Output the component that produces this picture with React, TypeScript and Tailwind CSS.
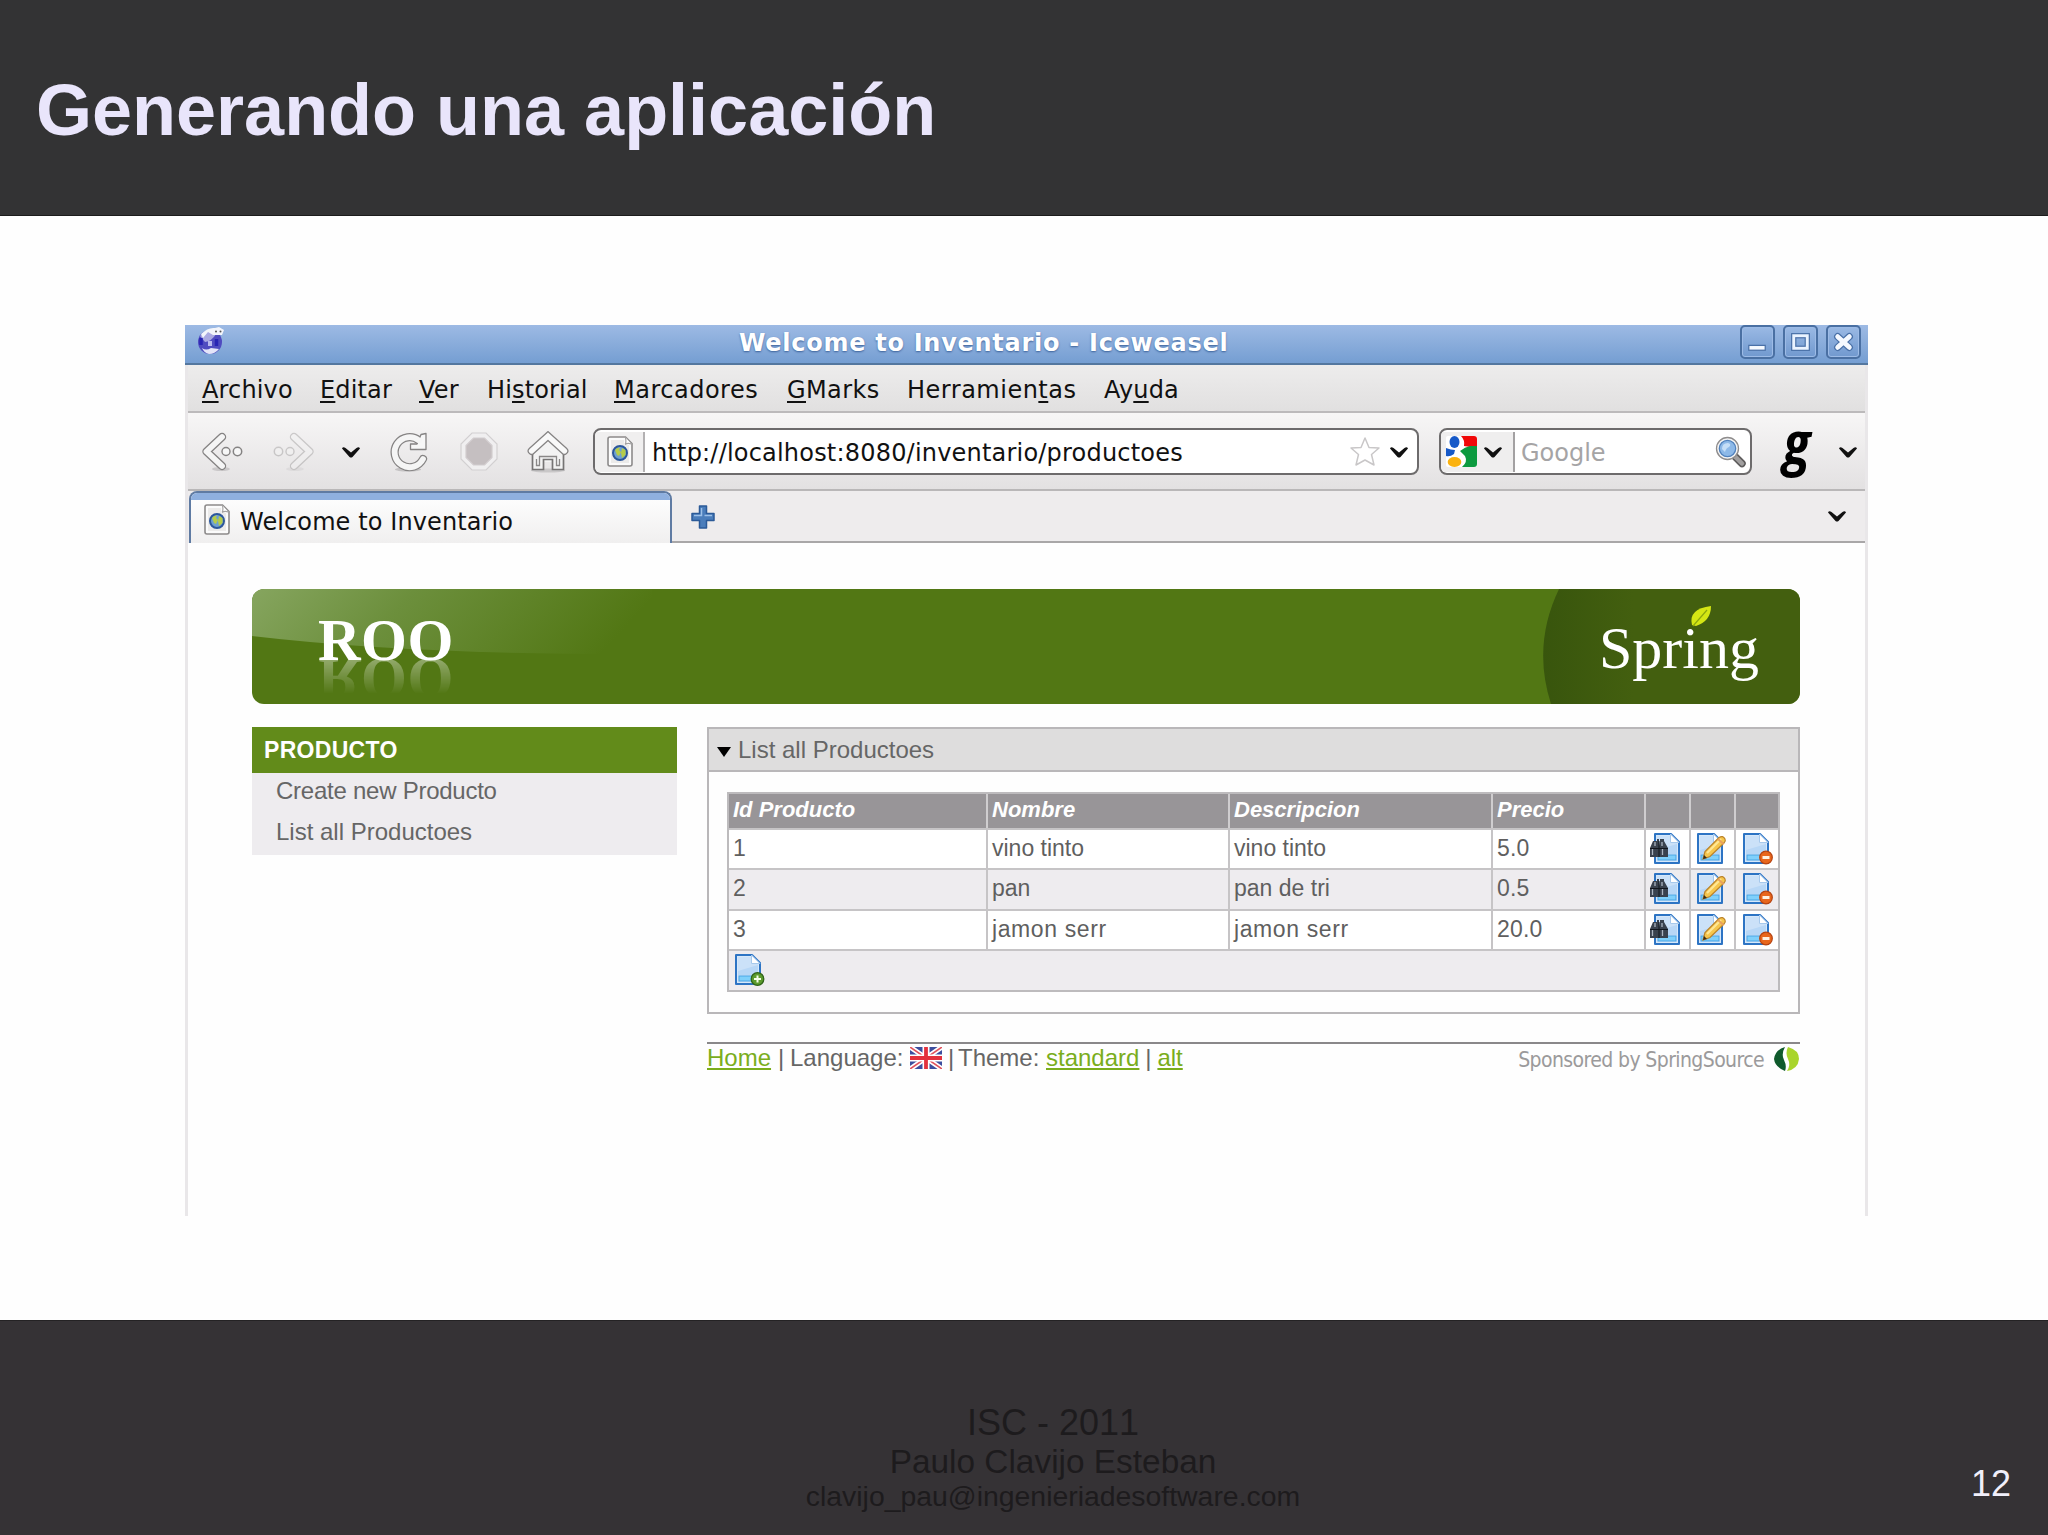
import React from 'react';

const menuItems = [
  { before: '', key: 'A', after: 'rchivo', width: 'w-[118px]' },
  { before: '', key: 'E', after: 'ditar', width: 'w-[99px]' },
  { before: '', key: 'V', after: 'er', width: 'w-[68px]' },
  { before: 'Hi', key: 's', after: 'torial', width: 'w-[127px]' },
  { before: '', key: 'M', after: 'arcadores', width: 'w-[173px] tracking-[0.5px]' },
  { before: '', key: 'G', after: 'Marks', width: 'w-[120px] tracking-[0.4px]' },
  { before: 'Herramien', key: 't', after: 'as', width: 'w-[197px] tracking-[0.5px]' },
  { before: 'Ay', key: 'u', after: 'da', width: 'w-[90px]' },
];

const productos = [
  { id: '1', nombre: 'vino tinto', descripcion: 'vino tinto', precio: '5.0' },
  { id: '2', nombre: 'pan', descripcion: 'pan de tri', precio: '0.5' },
  { id: '3', nombre: 'jamon serr', descripcion: 'jamon serr', precio: '20.0' },
];

const tableCols = 'grid grid-cols-[259px_242px_263px_153px_45px_45px_44px]';

function Chevron({ className = '' }: { className?: string }) {
  return (
    <svg viewBox="0 0 20 14" className={`w-5 h-3.5 shrink-0 ${className}`}>
      <path d="M1 3.5 Q2 1.5 4.5 3 L10 7.5 L15.500 3 Q18 1.500 19 3.500 L11.500 12 Q10 13 8.500 12 Z" fill="#111" />
    </svg>
  );
}

function PageIcon({ className = '' }: { className?: string }) {
  return (
    <svg viewBox="0 0 26 31" className={`w-[26px] h-[31px] shrink-0 ${className}`}>
      <path d="M3 1 H18.500 L25 7.500 V28 Q25 30 23 30 H3 Q1 30 1 28 V3 Q1 1 3 1 Z" fill="#fbfbfb" stroke="#8d8b8b" strokeWidth="1.6" />
      <path d="M4 4 H17 V9 H22 V27 H4 Z" fill="#ecebea" />
      <path d="M18.500 1.500 Q19.500 7 18 8.500 Q21 6.500 24.500 8" fill="#fff" stroke="#a5a3a3" strokeWidth="1.200" />
      <circle cx="13" cy="17" r="7" fill="#6fa0d0" stroke="#2c579b" strokeWidth="2" />
      <path d="M8 14 Q10 11 13 11.500 L12 14 L14 16 L12 20 L10 19 Z M15 12 L18.500 14 L18.500 19 L15 22 L14 17 Z" fill="#b5cc4a" />
    </svg>
  );
}

function BackIcon({ className = '' }: { className?: string }) {
  return (
    <svg viewBox="0 0 42 40" className={`w-[42px] h-10 shrink-0 ${className}`}>
      <ellipse cx="20" cy="37" rx="9" ry="2" fill="#bdbbbc" opacity="0.7" />
      <path d="M21 5 L5.500 19.500 L21 34" fill="none" stroke="#858383" strokeWidth="8.400" strokeLinecap="round" strokeLinejoin="round" />
      <path d="M21 5 L5.500 19.500 L21 34" fill="none" stroke="#f5f5f5" strokeWidth="5.800" strokeLinecap="round" strokeLinejoin="round" />
      <circle cx="25" cy="19.500" r="4" fill="#f7f7f7" stroke="#858383" strokeWidth="1.400" />
      <circle cx="36.500" cy="19.500" r="4.200" fill="#f7f7f7" stroke="#858383" strokeWidth="1.500" />
    </svg>
  );
}

function ReloadIcon() {
  return (
    <svg viewBox="0 0 38 40" className="w-[38px] h-10 shrink-0">
      <ellipse cx="18" cy="37.500" rx="13" ry="2" fill="#c4c2c3" />
      <path d="M29 8.500 A15 15 0 1 0 33 27" fill="none" stroke="#858383" strokeWidth="8.200" strokeLinecap="round" />
      <path d="M36 1.500 V17.500 H20.500 V12 H27 L31 2.500 Z" fill="#f7f7f7" stroke="#858383" strokeWidth="1.300" strokeLinejoin="round" />
      <path d="M29 8.500 A15 15 0 1 0 33 27" fill="none" stroke="#f5f5f5" strokeWidth="5.800" strokeLinecap="round" />
    </svg>
  );
}

function StopIcon() {
  return (
    <svg viewBox="0 0 38 40" className="w-[38px] h-10 shrink-0">
      <path d="M12 1 H26 L37 12 V27 L26 38 H12 L1 27 V12 Z" fill="#f0eff0" stroke="#d2d0d1" strokeWidth="1.200" />
      <path d="M13.500 6 H24.500 L32 13.500 V25.500 L24.500 33 H13.500 L6 25.500 V13.500 Z" fill="#c5bfc1" stroke="#d2cdcf" strokeWidth="1.200" />
    </svg>
  );
}

function HomeIcon() {
  return (
    <svg viewBox="0 0 42 42" className="w-[42px] h-[42px] shrink-0">
      <ellipse cx="21" cy="39.500" rx="17" ry="2" fill="#c9c7c8" />
      <path d="M5 20 L21 4 L37 20 V39 H25 V31 H17 V39 H5 Z" fill="#f3f3f3" />
      <path d="M5.500 22 V38.500 H16.500 V28.500 H25.500 V38.500 H36.500 V22" fill="#f3f3f3" stroke="#767474" strokeWidth="1.700" />
      <path d="M9.500 28 V34.500 H12.500 V25.500 H29.500 V34.500 H32.500 V28" fill="none" stroke="#8a8888" strokeWidth="1.300" />
      <path d="M4.500 20 L21 5 L37.500 20" fill="none" stroke="#858383" strokeWidth="7.800" strokeLinecap="round" />
      <path d="M4.500 20 L21 5 L37.500 20" fill="none" stroke="#f9f9f9" strokeWidth="5.300" strokeLinecap="round" />
    </svg>
  );
}

function GoogleIcon() {
  return (
    <svg viewBox="0 0 31 31" className="w-[31px] h-[31px] shrink-0">
      <rect width="31" height="31" rx="2" fill="#fff" />
      <path d="M15 0 H28 Q31 0 31 3 V12 L18 10 Q19 4 15 0 Z" fill="#f00808" />
      <path d="M31 10 V28 Q31 31 28 31 H16 Q22 26 19 20 L14 15 Q19 11 24 10 Z" fill="#0c9a3f" />
      <ellipse cx="8.500" cy="6" rx="5" ry="6" fill="#1659c8" />
      <path d="M0 12 Q5 14 9 14 L8 18 Q4 21 0 20 Z" fill="#1659c8" />
      <ellipse cx="8.500" cy="26" rx="6.800" ry="5" fill="#fbb20f" />
    </svg>
  );
}

function MagnifierIcon() {
  return (
    <svg viewBox="0 0 32 32" className="w-8 h-8 shrink-0">
      <path d="M19.500 20 L27 27.500" stroke="#5e5c5c" strokeWidth="7.500" strokeLinecap="round" />
      <path d="M20.500 21 L27 27.500" stroke="#a19f9f" strokeWidth="4.500" strokeLinecap="round" />
      <circle cx="12.500" cy="12.500" r="11" fill="#f4f4f4" stroke="#8f8d8d" strokeWidth="1.300" />
      <circle cx="12.500" cy="12.500" r="8.200" fill="#8db9e8" stroke="#5182bd" strokeWidth="1.300" />
      <path d="M7 13 Q7 7 13 7 Q17 8 14 11 Q11 12 10 16 Z" fill="#c5def7" />
    </svg>
  );
}

function IceweaselIcon() {
  return (
    <svg viewBox="0 0 28 28" className="w-7 h-7 shrink-0">
      <circle cx="13" cy="15" r="12" fill="#4f4bc0" />
      <path d="M3 9 Q8 3 14 4 L19 7 Q15 14 8 15 Z" fill="#aaa9e2" />
      <path d="M5 21 Q9 24 14 21 L22 22 Q18 27 12 27 Q7 26 5 21 Z" fill="#e4e5f8" />
      <path d="M11 14 h4 v5 h-4 Z" fill="#b9b9ee" />
      <path d="M4 11 V18 M19.500 12 V19" stroke="#2824b4" strokeWidth="3.500" />
      <path d="M4 7 Q11 0 18 1 L22 0 L27 3 L25 8 L16 8 L11 5 L6 11 Z" fill="#f3f5fb" />
      <circle cx="19" cy="4.500" r="1" fill="#555" />
      <circle cx="23.500" cy="4.500" r="1" fill="#555" />
    </svg>
  );
}

function WindowButton({ children }: { children: React.ReactNode }) {
  return (
    <div className="w-[35px] h-[34px] rounded-[5px] border-2 border-[#4a70a3] bg-gradient-to-b from-[#9ab9e4] to-[#7199cf] shadow-[inset_0_0_0_1px_#9dbbe6]">
      <svg viewBox="0 0 32 31" className="w-full h-full">{children}</svg>
    </div>
  );
}

// Sheet of paper shared by the table actions
function DocShape() {
  return (
    <>
      <path d="M5 1 H21 L29 9 V30 H5 Z" fill="#d6e8fa" stroke="#2d74c4" strokeWidth="2" strokeLinejoin="round" />
      <path d="M7 3 H20 V10 H27 V28 H7 Z" fill="#cbe1f8" />
      <path d="M7 17 L27 11 V21 H7 Z" fill="#b8d7f6" />
      <path d="M20.500 1 V9.500 H29 Z" fill="#fff" stroke="#a7c9ec" strokeWidth="1" />
      <rect x="8" y="22" width="18" height="5" fill="#7fd0fb" stroke="#4ba5e5" strokeWidth="1" />
    </>
  );
}

function ShowIcon() {
  return (
    <svg viewBox="-1 0 32 32" className="w-8 h-8">
      <DocShape />
      <path d="M3 8 H7 V6 H9 V8 L10 13 V24 H0 V15 Z M10 8 V6 H14 V8 L18 15 V24 H10 Z" fill="#39424e" />
      <path d="M2.500 15 V22 M12.500 15 V22 M5 9 V13 M12 9 V13" stroke="#aab4c0" strokeWidth="1.300" />
      <path d="M0 15.500 H18 M9 8 V24" stroke="#11161d" strokeWidth="1" />
    </svg>
  );
}

function EditIcon() {
  return (
    <svg viewBox="3 0 32 32" className="w-8 h-8">
      <DocShape />
      <path d="M10 26 L12 18.500 L26 4.500 Q30 2 32 6 Q33 8 31 10 L17 23.500 Z" fill="#f6c64d" stroke="#bb832a" strokeWidth="1.200" />
      <path d="M14 20 L28 6" stroke="#ffe795" strokeWidth="2.200" />
      <path d="M25 6 L30.500 11" stroke="#e8a060" strokeWidth="2" />
      <path d="M10 26 L11 22 L14 25 Z" fill="#3b2d18" />
    </svg>
  );
}

function DeleteIcon() {
  return (
    <svg viewBox="3 0 32 32" className="w-8 h-8">
      <DocShape />
      <circle cx="27" cy="24.500" r="6.300" fill="#e8661c" stroke="#b64310" strokeWidth="1.200" />
      <rect x="23.500" y="23" width="7" height="3" fill="#fff2e4" />
    </svg>
  );
}

function AddIcon() {
  return (
    <svg viewBox="3 0 32 32" className="w-8 h-8">
      <DocShape />
      <circle cx="26.500" cy="25" r="6.300" fill="#5c9b2d" stroke="#2f6318" strokeWidth="1.300" />
      <path d="M26.500 21.500 V28.500 M23 25 H30" stroke="#f5ffe9" strokeWidth="2" />
    </svg>
  );
}

function FlagIcon() {
  return (
    <svg viewBox="0 0 32 22" className="w-8 h-[22px]">
      <rect width="32" height="22" fill="#3c4e9e" />
      <path d="M0 0 L32 22 M32 0 L0 22" stroke="#fff" strokeWidth="5" />
      <path d="M0 0 L32 22 M32 0 L0 22" stroke="#e0525c" strokeWidth="1.600" />
      <path d="M16 0 V22 M0 11 H32" stroke="#fff" strokeWidth="7" />
      <path d="M16 0 V22 M0 11 H32" stroke="#e3313d" strokeWidth="3.800" />
    </svg>
  );
}

function Banner() {
  return (
    <div className="relative h-[115px] rounded-xl overflow-hidden bg-[#527714]">
      <svg viewBox="0 0 1548 115" className="absolute inset-0 w-full h-full">
        <defs>
          <linearGradient id="gloss" x1="0" y1="0" x2="1" y2="0.15">
            <stop offset="0" stopColor="#86a55f" />
            <stop offset="0.4" stopColor="#6c8f3c" />
            <stop offset="1" stopColor="#527714" />
          </linearGradient>
          <linearGradient id="corner" x1="0" y1="0" x2="1" y2="0">
            <stop offset="0" stopColor="#38550d" />
            <stop offset="0.35" stopColor="#435f0f" />
          </linearGradient>
        </defs>
        <path d="M0 0 H400 V65 Q160 66 0 47 Z" fill="url(#gloss)" />
        <path d="M1307 0 Q1280 56 1299 115 H1548 V0 Z" fill="url(#corner)" />
        <path d="M1440 36 Q1436 20 1459 17 Q1459 32 1444 37 Z" fill="#d5e614" />
        <path d="M1441 37 L1455 21" stroke="#8ba60e" strokeWidth="1.200" />
      </svg>
      <div className="relative flex justify-between items-start pl-[66px] pr-[41px] font-['Liberation_Serif',serif] text-white leading-[60px]">
        <div className="mt-[21px] h-[60px] text-[59px] font-bold tracking-[0.5px] [-webkit-box-reflect:below_-21px_linear-gradient(transparent_25%,rgba(255,255,255,0.42)_90%)]">ROO</div>
        <div className="text-[60px] pt-[29px]">Spring</div>
      </div>
    </div>
  );
}

function ProductTable() {
  return (
    <div className="w-[1053px] border-2 border-[#bdbbbd] text-[23px] text-[#5f5f5f]">
      <div className={`${tableCols} h-[33.500px] bg-[#989598] text-white text-[22px] font-bold italic leading-8`}>
        {['Id Producto', 'Nombre', 'Descripcion', 'Precio', '', '', ''].map((title, i) => (
          <div key={i} className="border-r-2 border-[#cfcdcf] last:border-r-0 pl-1">{title}</div>
        ))}
      </div>
      {productos.map((p) => (
        <div key={p.id} className={`${tableCols} h-[40.500px] border-t-2 border-[#c6c4c6] even:bg-white odd:bg-[#eeecef] leading-[37px] [&>div]:border-r-2 [&>div]:border-[#c6c4c6] [&>div:last-child]:border-r-0`}>
          <div className="pl-1">{p.id}</div>
          <div className={p.nombre.startsWith('jamon') ? 'pl-1 tracking-[0.6px]' : 'pl-1'}>{p.nombre}</div>
          <div className={p.nombre.startsWith('jamon') ? 'pl-1 tracking-[0.6px]' : 'pl-1'}>{p.descripcion}</div>
          <div className="pl-1 tracking-[0.2px]">{p.precio}</div>
          <div className="pt-[3px] pl-[3px]"><ShowIcon /></div>
          <div className="pt-[3px] pl-[5px]"><EditIcon /></div>
          <div className="pt-[3px] pl-1.5"><DeleteIcon /></div>
        </div>
      ))}
      <div className="h-[40.500px] border-t-2 border-[#c6c4c6] bg-[#eeecef] pl-[5px] pt-[3px]">
        <AddIcon />
      </div>
    </div>
  );
}

function PageFooter() {
  return (
    <div className="mt-[28px] border-t-2 border-[#8a888a] flex justify-between text-2xl leading-7 text-[#666]">
      <div className="flex whitespace-pre">
        <span className="text-[#7aad1c] underline decoration-2 underline-offset-2 w-[65px]">Home</span>
        <span className="w-[18px] text-center">|</span>
        <span className="w-[120px]">Language:</span>
        <span className="w-[34px] pt-[3px]"><FlagIcon /></span>
        <span className="w-[14px] text-center">|</span>
        <span className="w-[88px]">Theme:</span>
        <span className="text-[#7aad1c] underline decoration-2 underline-offset-2">standard</span>
        <span className="w-[18px] text-center">|</span>
        <span className="text-[#7aad1c] underline decoration-2 underline-offset-2">alt</span>
      </div>
      <div className="flex items-start">
        <span className="font-['DejaVu_Sans_Condensed','DejaVu_Sans',sans-serif] [font-stretch:condensed] text-[21px] leading-8 tracking-[-0.600px] text-[#9b9a9b] mr-2.5">Sponsored by SpringSource</span>
        <svg viewBox="0 0 25 26" className="w-[25px] h-[26px] mt-0.5 mr-px">
          <path d="M11 1 Q1 4 0 13 Q1 21 11 25 Q13 20 10 14 Q7 8 11 1 Z" fill="#0f5a2c" />
          <path d="M14 1 Q25 4 25 13 Q24 23 13 25 Q17 19 14 13 Q11 7 14 1 Z" fill="#a9d52c" />
        </svg>
      </div>
    </div>
  );
}

function BrowserWindow() {
  return (
    <div className="w-[1683px] h-[891px] flex flex-col font-['DejaVu_Sans',sans-serif] text-2xl text-[#111] whitespace-nowrap">
      {/* Title bar */}
      <div className="h-10 shrink-0 flex items-start bg-gradient-to-b from-[#9dbae4] to-[#759ed2] border-b-2 border-[#54779f]">
        <div className="pl-3 pt-0.5 w-[554px]"><IceweaselIcon /></div>
        <div className="flex-1 font-bold text-white leading-[37px] tracking-[0.720px] [text-shadow:0_1px_2px_#3c629a]">Welcome to Inventario - Iceweasel</div>
        <div className="flex gap-2 pr-[7px]">
          <WindowButton>
            <rect x="7" y="19" width="17" height="5" fill="#f5f9ff" stroke="#4a71a8" strokeWidth="1.300" />
          </WindowButton>
          <WindowButton>
            <rect x="9" y="9" width="14" height="13" fill="none" stroke="#4a71a8" strokeWidth="5.500" />
            <rect x="9" y="9" width="14" height="13" fill="none" stroke="#eaf3ff" strokeWidth="3" />
          </WindowButton>
          <WindowButton>
            <path d="M10 10 L22 21 M22 10 L10 21" stroke="#4a71a8" strokeWidth="7.500" strokeLinecap="round" />
            <path d="M10 10 L22 21 M22 10 L10 21" stroke="#f5f9ff" strokeWidth="5" strokeLinecap="round" />
          </WindowButton>
        </div>
      </div>

      <div className="flex-1 flex flex-col border-x-[3px] border-[#e9e7e9]">
        {/* Menu */}
        <div className="h-12 shrink-0 flex pl-3.5 pt-0.5 bg-gradient-to-b from-[#edecec] to-[#e1e0e0] border-b-2 border-[#bcbabb] leading-[47px] tracking-[0.150px]">
          {menuItems.map((m) => (
            <div key={m.key + m.after} className={m.width}>
              {m.before}<span className="underline decoration-2 underline-offset-[3px]">{m.key}</span>{m.after}
            </div>
          ))}
        </div>

        {/* Navigation toolbar */}
        <div className="h-[78px] shrink-0 flex items-center pl-[13px] pt-px bg-gradient-to-b from-[#f7f6f6] to-[#e3e1e2] border-b-2 border-[#b9b7b8]">
          <BackIcon />
          <BackIcon className="ml-[30px] -scale-x-100 opacity-35" />
          <Chevron className="ml-[26px]" />
          <div className="ml-[29px]"><ReloadIcon /></div>
          <div className="ml-8"><StopIcon /></div>
          <div className="ml-[29px]"><HomeIcon /></div>
          <div className="ml-6 w-[826px] h-[47px] flex items-center rounded-lg border-2 border-[#6d6b6c] bg-white overflow-hidden">
            <div className="w-[50px] h-10 pl-3 flex items-center bg-[#f0efef] border-r-2 border-[#b3b1b2]"><PageIcon /></div>
            <div className="flex-1 pl-[7px] pt-[3px] tracking-[0.200px]">http://localhost:8080/inventario/productoes</div>
            <svg viewBox="0 0 32 31" className="w-8 h-[31px]">
              <path d="M16 2 L20 11.500 L30 12 L22.500 18.500 L25 29 L16 24 L7 29 L9.500 18.500 L2 12 L12 11.500 Z" fill="#fff" stroke="#c9c7c8" strokeWidth="1.500" strokeLinejoin="round" />
            </svg>
            <Chevron className="ml-2 mr-2" />
          </div>
          <div className="ml-5 w-[313px] h-[47px] flex items-center rounded-lg border-2 border-[#6d6b6c] bg-white overflow-hidden">
            <div className="w-[74px] h-10 pl-[5px] flex items-center gap-1.5 bg-[#efeeee] border-r-2 border-[#a3a1a2]">
              <GoogleIcon />
              <Chevron />
            </div>
            <div className="flex-1 pl-1.5 pt-[3px] text-[#a5a4a5]">Google</div>
            <div className="mr-[3px]"><MagnifierIcon /></div>
          </div>
          <div className="ml-[31px] w-[30px] h-[60px] leading-[42px] text-[62px] text-black font-bold italic font-['Open_Sans','Noto_Sans',sans-serif] origin-top-left scale-x-[0.82] scale-y-[0.94]">g</div>
          <Chevron className="ml-[25px]" />
        </div>

        {/* Tabs */}
        <div className="h-[52px] shrink-0 flex bg-[#eeeced]">
          <div className="w-[484px] pl-px">
            <div className="h-[52px] rounded-t-lg border-x-2 border-t-2 border-[#5f7ba3] bg-gradient-to-b from-white to-[#f0efef] overflow-hidden">
              <div className="h-[7px] bg-[#8fb0df]" />
              <div className="flex items-center h-[43px] pl-[13px]">
                <PageIcon className="-mt-1" />
                <span className="ml-2.5 tracking-[0.1px]">Welcome to Inventario</span>
              </div>
            </div>
          </div>
          <div className="flex-1 flex items-start justify-between border-b-2 border-[#a9a7a8]">
            <svg viewBox="0 0 24 24" className="w-6 h-6 ml-[19px] mt-3.5">
              <path d="M8.500 1 H15.500 V8.500 H23 V15.500 H15.500 V23 H8.500 V15.500 H1 V8.500 H8.500 Z" fill="#4a7dbb" stroke="#2b5a98" strokeWidth="1.500" strokeLinejoin="round" />
              <path d="M10.500 3 V10.500 H3 M13.500 10.500 H21" fill="none" stroke="#9cc0e8" strokeWidth="1.500" />
            </svg>
            <Chevron className="mr-[18px] mt-[18px]" />
          </div>
        </div>

        {/* Page */}
        <div className="flex-1 bg-[#fefefe] pt-[46px] pl-16 pr-[65px] font-['Liberation_Sans',sans-serif]">
          <Banner />
          <div className="flex justify-between pt-[23px]">
            <div className="w-[425px]">
              <div className="h-[46px] bg-[#628b1a] pl-3 text-[23px] font-bold text-white leading-[46px] tracking-[0.3px]">PRODUCTO</div>
              <div className="h-[82px] bg-[#eeecef] pl-[24px] text-2xl text-[#666]">
                <div className="h-[41px] leading-[36px] tracking-[-0.250px]">Create new Producto</div>
                <div className="h-[41px] leading-[35px]">List all Productoes</div>
              </div>
            </div>
            <div className="w-[1093px]">
              <div className="h-[287px] border-2 border-[#b9b7b9]">
                <div className="h-[43px] flex items-center bg-[#dedddd] border-b-2 border-[#b9b7b9] text-[#666] pl-2">
                  <svg viewBox="0 0 14 10" className="w-3.5 h-2.5 mt-1"><path d="M0 0 H14 L7 10 Z" fill="#000" /></svg>
                  <span className="ml-[7px]">List all Productoes</span>
                </div>
                <div className="pt-[20px] pl-[18px]"><ProductTable /></div>
              </div>
              <PageFooter />
            </div>
          </div>
        </div>
      </div>
    </div>
  );
}

export default function App() {
  return (
    <div className="w-[2048px] h-[1535px] flex flex-col overflow-hidden bg-[#fefefe] font-['Liberation_Sans',Arial,sans-serif]">
      <header className="h-[216px] shrink-0 bg-[#333334] border-b border-[#1c1c1c] pl-[36px] pt-[70px]">
        <h1 className="text-[72px] leading-[80px] font-bold text-[#e9e5fb]">Generando una aplicación</h1>
      </header>

      <main className="h-[1104px] shrink-0 pt-[109px] pl-[185px]">
        <BrowserWindow />
      </main>

      <footer className="relative flex-1 bg-[#353235] border-t border-[#242224] text-[#1d1b1d] text-center">
        <div className="w-[2106px] pt-[82px]">
          <p className="text-[36px] leading-[40px] [font-kerning:none]">ISC - 2011</p>
          <p className="text-[33.400px] leading-[38px]">Paulo Clavijo Esteban</p>
          <p className="text-[28.400px] leading-[31px]">clavijo_pau@ingenieriadesoftware.com</p>
        </div>
        <div className="absolute left-[1971px] top-[143px] text-[36px] leading-[40px] text-[#f1effa]">12</div>
      </footer>
    </div>
  );
}
